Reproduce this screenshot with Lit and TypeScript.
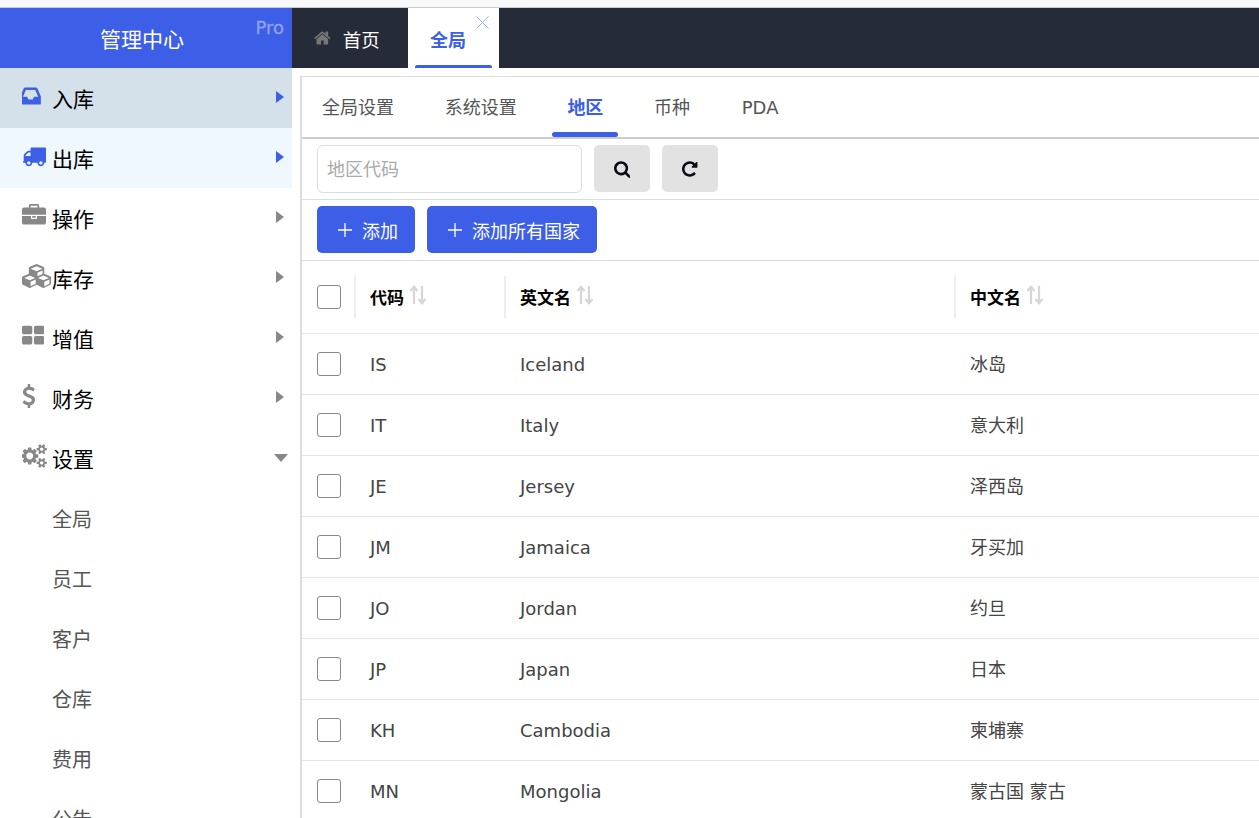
import { LitElement, html, css, svg } from "lit";
import { customElement } from "lit/decorators.js";

const icons: Record<string, { box: string; d: string }> = {
  inbox: {
    box: "128 0 1536 1792",
    d: "M1023 960h316q-1-3-2.500-8.500t-2.500-7.500l-212-496h-708l-212 496q-1 3-2.500 8.500t-2.500 7.500h316l95 192h320zm513 30v482q0 26-19 45t-45 19h-1408q-26 0-45-19t-19-45v-482q0-62 25-123l238-552q10-25 36.500-42t52.500-17h832q26 0 52.500 17t36.500 42l238 552q25 61 25 123z",
  },
  truck: {
    box: "0 0 1792 1792",
    d: "M640 1408q0-52-38-90t-90-38-90 38-38 90 38 90 90 38 90-38 38-90zm-384-512h384v-256h-158q-13 0-22 9l-195 195q-9 9-9 22v30zm1280 512q0-52-38-90t-90-38-90 38-38 90 38 90 90 38 90-38 38-90zm256-1088v1024q0 15-4 26.500t-13.500 18.500-16.500 11.500-23.500 6-22.500 2-25.500 0-22.500-.5q0 106-75 181t-181 75-181-75-75-181h-384q0 106-75 181t-181 75-181-75-75-181h-64q-3 0-22.500.5t-25.500 0-22.500-2-23.500-6-16.500-11.500-13.500-18.500-4-26.500q0-26 19-45t45-19v-320q0-8-.5-35t0-38 2.500-34.500 6.500-37 14-30.500 22.500-30l198-198q19-19 50.500-32t58.500-13h160v-192q0-26 19-45t45-19h1024q26 0 45 19t19 45z",
  },
  briefcase: {
    box: "0 0 1792 1792",
    d: "M640 256h512v-128h-512v128zm1152 640v480q0 66-47 113t-113 47h-1472q-66 0-113-47t-47-113v-480h672v160q0 26 19 45t45 19h320q26 0 45-19t19-45v-160h672zm-768 0v128h-256v-128h256zm768-480v384h-1792v-384q0-66 47-113t113-47h352v-160q0-40 28-68t68-28h576q40 0 68 28t28 68v160h352q66 0 113 47t47 113z",
  },
  cubes: {
    box: "0 -32 2176 1792",
    d: "M640 1632l384-192v-314l-384 164v342zm-64-454l404-173-404-173-404 173zm1088 454l384-192v-314l-384 164v342zm-64-454l404-173-404-173-404 173zm-448-293l384-165v-266l-384 164v267zm-64-379l441-189-441-189-441 189zM2176 992v416q0 36-19 67t-52 47l-448 224q-25 14-57 14t-57-14l-448-224q-4-2-7-4-2 2-7 4l-448 224q-25 14-57 14t-57-14l-448-224q-33-16-52-47t-19-67v-416q0-38 21.500-70t56.500-48l434-186v-400q0-38 21.500-70t56.500-48l448-192q23-10 50-10t50 10l448 192q35 16 56.500 48t21.500 70v400l434 186q36 16 57 48t21 70z",
  },
  grid: {
    box: "64 0 1664 1792",
    d: "M832 1024v384q0 52-38 90t-90 38h-512q-52 0-90-38t-38-90v-384q0-52 38-90t90-38h512q52 0 90 38t38 90zm0-768v384q0 52-38 90t-90 38h-512q-52 0-90-38t-38-90v-384q0-52 38-90t90-38h512q52 0 90 38t38 90zm896 768v384q0 52-38 90t-90 38h-512q-52 0-90-38t-38-90v-384q0-52 38-90t90-38h512q52 0 90 38t38 90zm0-768v384q0 52-38 90t-90 38h-512q-52 0-90-38t-38-90v-384q0-52 38-90t90-38h512q52 0 90 38t38 90z",
  },
  usd: {
    box: "384 0 1024 1792",
    d: "M1362 1185q0 153-99.500 263.500t-258.500 136.500v175q0 14-9 23t-23 9h-135q-13 0-22.500-9.500t-9.500-22.500v-175q-66-9-127.500-31t-101.500-44.500-74-48-46.500-37.500-17.500-18q-17-21-2-41l103-135q7-10 23-12 15-2 24 9l2 2q113 99 243 125 37 8 74 8 81 0 142.500-43t61.500-122q0-28-15-53t-33.500-42-58.500-37.500-66-32-80-32.500q-39-16-61.500-25t-61.500-26.500-62.500-31-56.500-35.500-53.500-42.500-43.500-49-35.500-58-21-66.500-8.500-78q0-138 98-242t255-134v-180q0-13 9.500-22.500t22.500-9.500h135q14 0 23 9t9 23v176q57 6 110.500 23t87 33.500 63.500 37.500 39 29 15 14q17 18 5 38l-81 146q-8 15-23 16-14 3-27-7-3-3-14.500-12t-39-26.500-58.500-32-74.500-26-85.500-11.500q-95 0-155 43t-60 111q0 26 8.500 48t29.500 41.500 39.500 33 56 31 60.500 27 70 27.500q53 20 81 31.500t76 35 75.500 42.500 62 50 53 63.500 31.500 76.500 13 94z",
  },
  gears: {
    box: "0 0 1920 1792",
    d: "M832 896q0-106-75-181t-181-75-181 75-75 181 75 181 181 75 181-75 75-181zm768 512q0-52-38-90t-90-38-90 38-38 90q0 53 37.500 90.500t90.500 37.500 90.500-37.500 37.500-90.500zm0-1024q0-52-38-90t-90-38-90 38-38 90q0 53 37.500 90.500t90.500 37.500 90.500-37.500 37.500-90.500zm-384 421v185q0 10-7 19.500t-16 10.500l-155 24q-11 35-32 76 34 48 90 115 7 11 7 20 0 12-7 19-23 30-82.500 89.500t-78.500 59.500q-11 0-21-7l-115-90q-37 19-77 31-11 108-23 155-7 24-30 24h-186q-11 0-20-7.500t-10-17.500l-23-153q-34-10-75-31l-118 89q-7 7-20 7-11 0-21-8-144-133-144-160 0-9 7-19 10-14 41-53t47-61q-23-44-35-82l-152-24q-10-1-17-9.500t-7-19.500v-185q0-10 7-19.500t16-10.500l155-24q11-35 32-76-34-48-90-115-7-11-7-20 0-12 7-20 22-30 82-89t79-59q11 0 21 7l115 90q34-18 77-32 11-108 23-154 7-24 30-24h186q11 0 20 7.500t10 17.500l23 153q34 10 75 31l118-89q8-7 20-7 11 0 21 8 144 133 144 160 0 8-7 19-12 16-42 54t-45 60q23 48 34 82l152 23q10 2 17 10.500t7 19.500zm640 533v140q0 16-149 31-12 27-30 52 51 113 51 138 0 4-4 7-122 71-124 71-8 0-46-47t-52-68q-20 2-30 2t-30-2q-14 21-52 68t-46 47q-2 0-124-71-4-3-4-7 0-25 51-138-18-25-30-52-149-15-149-31v-140q0-16 149-31 13-29 30-52-51-113-51-138 0-4 4-7 4-2 35-20t59-34 30-16q8 0 46 46.500t52 67.500q20-2 30-2t30 2q51-71 92-112l6-2q4 0 124 70 4 3 4 7 0 25-51 138 17 23 30 52 149 15 149 31zm0-1024v140q0 16-149 31-12 27-30 52 51 113 51 138 0 4-4 7-122 71-124 71-8 0-46-47t-52-68q-20 2-30 2t-30-2q-14 21-52 68t-46 47q-2 0-124-71-4-3-4-7 0-25 51-138-18-25-30-52-149-15-149-31v-140q0-16 149-31 13-29 30-52-51-113-51-138 0-4 4-7 4-2 35-20t59-34 30-16q8 0 46 46.500t52 67.500q20-2 30-2t30 2q51-71 92-112l6-2q4 0 124 70 4 3 4 7 0 25-51 138 17 23 30 52 149 15 149 31z",
  },
  home: {
    box: "64 0 1664 1792",
    d: "M1472 992v480q0 26-19 45t-45 19h-384v-384h-256v384h-384q-26 0-45-19t-19-45v-480q0-1 .5-3t.5-3l575-474 575 474q1 2 1 6zm223-69l-62 74q-8 9-21 11h-3q-13 0-21-7l-692-577-692 577q-12 8-24 7-13-2-21-11l-62-74q-8-10-7-23.500t11-21.500l719-599q32-26 76-26t76 26l244 204v-195q0-14 9-23t23-9h192q14 0 23 9t9 23v408l219 182q10 8 11 21.500t-7 23.500z",
  },
  search: {
    box: "64 0 1664 1792",
    d: "M1216 832q0-185-131.500-316.500t-316.500-131.500-316.500 131.500-131.500 316.500 131.500 316.500 316.500 131.500 316.500-131.500 131.500-316.500zm512 832q0 52-38 90t-90 38q-54 0-90-38l-343-342q-179 124-399 124-143 0-273.500-55.500t-225-150-150-225-55.500-273.500 55.500-273.500 150-225 225-150 273.500-55.500 273.500 55.500 225 150 150 225 55.500 273.500q0 220-124 399l343 343q37 37 37 90z",
  },
  repeat: {
    box: "128 0 1536 1792",
    d: "M1664 256v448q0 26-19 45t-45 19h-448q-42 0-59-40-17-39 14-69l138-138q-148-137-349-137-104 0-198.500 40.500t-163.500 109.500-109.500 163.500-40.500 198.500 40.500 198.500 109.500 163.500 163.500 109.500 198.500 40.500q119 0 225-52t179-147q7-10 23-12 15 0 25 9l137 138q9 8 9.500 20.500t-7.500 22.500q-109 132-264 204.500t-327 72.500q-156 0-298-61t-245-164-164-245-61-298 61-298 164-245 245-164 298-61q147 0 284.500 55.500t244.500 156.500l130-129q29-31 70-14 39 17 39 59z",
  },
};

function fa(name: string, size: number) {
  const ic = icons[name];
  const w = (Number(ic.box.split(" ")[2]) / 1792) * size;
  return html`<svg
    class="fa"
    viewBox=${ic.box}
    width=${w}
    height=${size}
    fill="currentColor"
  >
    ${svg`<path d=${ic.d}></path>`}
  </svg>`;
}

const sortIcon = html`<svg class="sort" width="18" height="20" viewBox="0 0 18 20">
  <path
    d="M5 19V2M1.500 6L5 1.800 8.500 6M13 1v17M9.500 14L13 18.200 16.500 14"
    fill="none"
    stroke="#d6d6d6"
    stroke-width="2.200"
  ></path>
</svg>`;

const menu = [
  { icon: "inbox", label: "入库", cls: "active" },
  { icon: "truck", label: "出库", cls: "hover" },
  { icon: "briefcase", label: "操作", cls: "" },
  { icon: "cubes", label: "库存", cls: "" },
  { icon: "grid", label: "增值", cls: "" },
  { icon: "usd", label: "财务", cls: "" },
  { icon: "gears", label: "设置", cls: "open" },
];

const subMenu = ["全局", "员工", "客户", "仓库", "费用", "公告"];

const regions = [
  ["IS", "Iceland", "冰岛"],
  ["IT", "Italy", "意大利"],
  ["JE", "Jersey", "泽西岛"],
  ["JM", "Jamaica", "牙买加"],
  ["JO", "Jordan", "约旦"],
  ["JP", "Japan", "日本"],
  ["KH", "Cambodia", "柬埔寨"],
  ["MN", "Mongolia", "蒙古国 蒙古"],
];

const subTabs = ["全局设置", "系统设置", "地区", "币种", "PDA"];

@customElement("app-root")
export class AppRoot extends LitElement {
  static styles = css`
    :host {
      display: block;
      height: 818px;
      overflow: hidden;
      background: #fff;
      font-family: "DejaVu Sans", "Noto Sans CJK SC", sans-serif;
      font-size: 18px;
      color: #444;
    }
    .fa {
      display: block;
      flex: none;
    }
    .strip {
      height: 7px;
      background: #f8f9fb;
      border-bottom: 1px solid #ccc;
    }
    .top {
      display: flex;
      height: 60px;
      background: #252b38;
    }
    .brand {
      position: relative;
      width: 292px;
      flex: none;
      display: flex;
      align-items: center;
      justify-content: center;
      background: #3d5ee6;
      color: #fff;
      font-size: 21px;
      padding-right: 8px;
      box-sizing: border-box;
    }
    .pro {
      position: absolute;
      top: 9px;
      right: 8px;
      font-size: 18px;
      color: #8ea3ee;
      -webkit-text-stroke: 0.3px #8ea3ee;
    }
    .home-tab {
      width: 116px;
      display: flex;
      align-items: center;
      gap: 12px;
      padding: 2px 0 0 22px;
      box-sizing: border-box;
      color: #fff;
      font-size: 18.500px;
    }
    .home-tab .fa {
      color: #777;
      margin-bottom: 3px;
    }
    .cur-tab {
      position: relative;
      width: 91px;
      display: flex;
      align-items: center;
      padding: 2px 0 0 22px;
      box-sizing: border-box;
      background: #fff;
      color: #3d5ee6;
      font-weight: 700;
    }
    .cur-tab::after {
      content: "";
      position: absolute;
      left: 7px;
      right: 7px;
      bottom: 0;
      height: 3px;
      border-radius: 2px 2px 0 0;
      background: #3d5ee6;
    }
    .close {
      position: absolute;
      top: 8px;
      right: 10px;
    }
    .body {
      display: flex;
      height: 750px;
    }
    .side {
      width: 292px;
      flex: none;
      overflow: hidden;
    }
    .item {
      height: 60px;
      display: flex;
      align-items: center;
      padding-left: 22px;
      color: #000;
      font-size: 21px;
    }
    .item .ic {
      width: 30px;
      flex: none;
      margin-bottom: 4px;
      color: #888;
    }
    .item.active {
      background: #d5e1ea;
    }
    .item.hover {
      background: #eff7ff;
    }
    .item.active .ic,
    .item.hover .ic {
      color: #3d5ee6;
    }
    .item .label {
      flex: 1;
      margin-top: -1px;
    }
    .arrow {
      width: 0;
      height: 0;
      margin: 0 8px 2px 0;
      border-style: solid;
      border-width: 6px 0 6px 8px;
      border-color: transparent transparent transparent #888;
    }
    .active .arrow,
    .hover .arrow {
      border-left-color: #3d5ee6;
    }
    .open .arrow {
      margin: 0 4px 0 0;
      border-width: 8px 7px 0 7px;
      border-color: #888 transparent transparent transparent;
    }
    .sub {
      height: 60px;
      display: flex;
      align-items: center;
      padding-left: 52px;
      box-sizing: border-box;
      color: #555;
      font-size: 20px;
    }
    .main {
      flex: 1;
      min-width: 0;
      padding: 8px 0 0 8px;
    }
    .card {
      height: 100%;
      border-top: 1px solid #ddd;
      border-left: 2px solid #ddd;
      box-sizing: border-box;
    }
    .tabs {
      display: flex;
      gap: 20.700px;
      height: 62px;
      padding-left: 5px;
      box-sizing: border-box;
      border-bottom: 2px solid #ccc;
    }
    .tab {
      position: relative;
      display: flex;
      align-items: center;
      padding: 0 15px 4px;
      color: #555;
      margin-bottom: -2px;
    }
    .tab:last-child {
      padding-bottom: 1px;
      padding-left: 16px;
    }
    .tab.on {
      color: #3d5ee6;
      font-weight: 700;
    }
    .tab.on::after {
      content: "";
      position: absolute;
      left: 0;
      right: 0;
      bottom: 2px;
      height: 5px;
      border-radius: 3px;
      background: #3d5ee6;
    }
    .filter {
      display: flex;
      gap: 12px;
      height: 61px;
      padding: 6px 0 0 15px;
      box-sizing: border-box;
      border-bottom: 1px solid #ddd;
    }
    .filter input {
      width: 265px;
      height: 48px;
      margin: 0;
      padding: 0 9px;
      box-sizing: border-box;
      border: 1px solid #ddd;
      border-radius: 6px;
      font: inherit;
      outline: none;
    }
    .filter input::placeholder {
      color: #aaa;
    }
    .gray {
      width: 56px;
      height: 47px;
      display: flex;
      align-items: center;
      justify-content: center;
      background: #e2e2e2;
      border-radius: 5px;
      color: #0a0a14;
    }
    .tools {
      display: flex;
      gap: 12px;
      height: 61px;
      padding: 6px 0 0 15px;
      box-sizing: border-box;
      border-bottom: 1px solid #ddd;
    }
    .btn {
      height: 47px;
      display: flex;
      align-items: center;
      gap: 9px;
      padding: 0 16px 0 20px;
      background: #3d5ee6;
      border-radius: 5px;
      color: #fff;
      min-width: 98px;
      box-sizing: border-box;
    }
    .btn + .btn {
      padding-right: 15px;
      min-width: 170px;
    }
    .row {
      display: grid;
      grid-template-columns: 52px 150px 450px 1fr;
      align-items: center;
      height: 61px;
      box-sizing: border-box;
      border-bottom: 1px solid #e4e4e4;
    }
    .row.head {
      height: 73px;
      border-bottom-color: #e4ebf0;
      color: #000;
      font-weight: 700;
      font-size: 17px;
    }
    .row .c {
      padding-left: 16px;
    }
    .row .c.zh {
      padding-bottom: 3px;
    }
    .row.head .c {
      display: flex;
      align-items: center;
      height: 42px;
      gap: 5px;
      border-left: 2px solid #eee;
      padding: 0 0 2px 14px;
      box-sizing: border-box;
    }
    .box {
      display: block;
      margin-left: 15px;
      width: 24px;
      height: 24px;
      box-sizing: border-box;
      border: 1px solid #888;
      border-radius: 3px;
      background: #fff;
    }
    .sort {
      display: block;
      margin-bottom: 2px;
    }
  `;

  render() {
    return html`
      <div class="strip"></div>
      <div class="top">
        <div class="brand">管理中心<span class="pro">Pro</span></div>
        <div class="home-tab">${fa("home", 18)}<span>首页</span></div>
        <div class="cur-tab">
          全局
          <svg class="close" width="13" height="13" viewBox="0 0 13 13">
            <path d="M.5.5l12 12M12.500.5l-12 12" stroke="#9db0f0" fill="none"></path>
          </svg>
        </div>
      </div>
      <div class="body">
        <div class="side">
          ${menu.map(
            (m) => html`<div class="item ${m.cls}">
              <span class="ic">${fa(m.icon, 24)}</span>
              <span class="label">${m.label}</span>
              <span class="arrow"></span>
            </div>`
          )}
          ${subMenu.map((s) => html`<div class="sub">${s}</div>`)}
        </div>
        <div class="main">
          <div class="card">
            <div class="tabs">
              ${subTabs.map(
                (t) => html`<div class="tab ${t === "地区" ? "on" : ""}">${t}</div>`
              )}
            </div>
            <div class="filter">
              <input placeholder="地区代码" />
              <div class="gray">${fa("search", 18)}</div>
              <div class="gray">${fa("repeat", 18)}</div>
            </div>
            <div class="tools">
              <div class="btn">${this.plus()}添加</div>
              <div class="btn">${this.plus()}添加所有国家</div>
            </div>
            <div class="row head">
              <div><span class="box"></span></div>
              <div class="c">代码${sortIcon}</div>
              <div class="c">英文名${sortIcon}</div>
              <div class="c">中文名${sortIcon}</div>
            </div>
            ${regions.map(
              (r) => html`<div class="row">
                <div><span class="box"></span></div>
                <div class="c">${r[0]}</div>
                <div class="c">${r[1]}</div>
                <div class="c zh">${r[2]}</div>
              </div>`
            )}
          </div>
        </div>
      </div>
    `;
  }

  plus() {
    return html`<svg width="16" height="16" viewBox="0 0 16 16">
      <path d="M8 1v14M1 8h14" stroke="#fff" stroke-width="1.300" fill="none"></path>
    </svg>`;
  }
}
